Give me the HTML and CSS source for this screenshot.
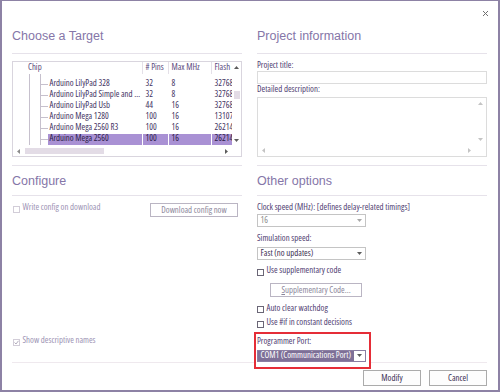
FILE: index.html
```html
<!DOCTYPE html>
<html>
<head>
    <meta charset="UTF-8">
    <title>Project settings</title>
    <link rel="stylesheet" href="styles.css">
</head>
<body>
<div class="dialog">
    <div class="topbar">
        <svg class="close" width="7" height="7" viewBox="0 0 7 7"><path d="M1 1L6 6M6 1L1 6" stroke="#707070" stroke-width="1"/></svg>
    </div>

    <div class="content">
        <!-- target chooser -->
        <div class="section">
            <div class="section-title">Choose a Target</div>
            <div class="tree">
                <div class="tree-main">
                    <div class="tree-head">
                        <span class="head-chip">Chip</span>
                        <span class="head-col"># Pins</span>
                        <span class="head-col">Max MHz</span>
                        <span class="head-col">Flash</span>
                    </div>
                    <div class="tree-body">
                        <div class="tree-rows">
                            <div class="row"><span class="indent"></span><span class="name">Arduino LilyPad 328</span><span class="num">32</span><span class="num">8</span><span class="num">32768</span></div>
                            <div class="row"><span class="indent"></span><span class="name cut">Arduino LilyPad Simple and SimpleSnap</span><span class="num">32</span><span class="num">8</span><span class="num">32768</span></div>
                            <div class="row"><span class="indent"></span><span class="name">Arduino LilyPad Usb</span><span class="num">44</span><span class="num">16</span><span class="num">32768</span></div>
                            <div class="row"><span class="indent"></span><span class="name">Arduino Mega 1280</span><span class="num">100</span><span class="num">16</span><span class="num">131072</span></div>
                            <div class="row"><span class="indent"></span><span class="name">Arduino Mega 2560 R3</span><span class="num">100</span><span class="num">16</span><span class="num">262144</span></div>
                            <div class="row selected"><span class="indent"></span><span class="name">Arduino Mega 2560</span><span class="num">100</span><span class="num">16</span><span class="num">262144</span></div>
                        </div>
                    </div>
                </div>
                <div class="vscroll">
                    <span class="arrow"><svg width="5" height="3"><path d="M0 3L2.5 0L5 3Z" fill="#5c5c5c"/></svg></span>
                    <span class="vtrack"><span class="vthumb"></span></span>
                    <span class="arrow"><svg width="5" height="3"><path d="M0 0L2.5 3L5 0Z" fill="#5c5c5c"/></svg></span>
                </div>
                <div class="hscroll">
                    <span class="harrow"><svg width="3" height="5"><path d="M3 0L0 2.5L3 5Z" fill="#8c8c8c"/></svg></span>
                    <span class="htrack"><span class="hthumb"></span></span>
                    <span class="harrow"><svg width="3" height="5"><path d="M0 0L3 2.5L0 5Z" fill="#5c5c5c"/></svg></span>
                </div>
                <div></div>
            </div>
        </div>

        <!-- project info -->
        <div class="section">
            <div class="section-title">Project information</div>
            <div class="label">Project title:</div>
            <div class="input"></div>
            <div class="label gap1">Detailed description:</div>
            <div class="textarea">
                <div class="ta-main"></div>
                <div class="vscroll">
                    <span class="arrow"><svg width="5" height="3"><path d="M0 3L2.5 0L5 3Z" fill="#c4c4c4"/></svg></span>
                    <span class="vtrack"></span>
                    <span class="arrow"><svg width="5" height="3"><path d="M0 0L2.5 3L5 0Z" fill="#c4c4c4"/></svg></span>
                </div>
                <div class="hscroll">
                    <span class="harrow"><svg width="3" height="5"><path d="M3 0L0 2.5L3 5Z" fill="#c4c4c4"/></svg></span>
                    <span class="htrack"></span>
                    <span class="harrow"><svg width="3" height="5"><path d="M0 0L3 2.5L0 5Z" fill="#c4c4c4"/></svg></span>
                </div>
                <div></div>
            </div>
        </div>

        <!-- configure -->
        <div class="section lower">
            <div class="section-title">Configure</div>
            <div class="config-row">
                <label class="check disabled"><span class="box"></span>Write config on download</label>
                <button class="btn btn-download">Download config now</button>
            </div>
            <label class="check disabled bottom-check"><span class="box"><svg width="5" height="5" viewBox="0 0 5 5"><path d="M0.5 2.5L2 4L4.5 0.8" fill="none" stroke="#aaa3b6" stroke-width="0.9"/></svg></span>Show descriptive names</label>
        </div>

        <!-- other options -->
        <div class="section lower">
            <div class="section-title">Other options</div>
            <div class="label">Clock speed (MHz): [defines delay-related timings]</div>
            <div class="combo combo-off gap2"><span class="combo-text">16</span><span class="combo-btn"><svg width="5" height="3"><path d="M0 0L2.5 3L5 0Z" fill="#a8a8a8"/></svg></span></div>
            <div class="label gap7">Simulation speed:</div>
            <div class="combo gap4"><span class="combo-text">Fast (no updates)</span><span class="combo-btn"><svg width="5" height="3"><path d="M0 0L2.5 3L5 0Z" fill="#5c5c5c"/></svg></span></div>
            <label class="check gap6"><span class="box"></span>Use supplementary code</label>
            <button class="btn btn-supp"><u>S</u>upplementary Code...</button>
            <label class="check gap7"><span class="box"></span>Auto clear watchdog</label>
            <label class="check gap5"><span class="box"></span>Use #if in constant decisions</label>
            <div class="port-box">
                <div class="label">Programmer Port:</div>
                <div class="combo combo-port"><span class="combo-text">COM1 (Communications Port)</span><span class="combo-btn"><svg width="5" height="3"><path d="M0 0L2.5 3L5 0Z" fill="#5c5c5c"/></svg></span></div>
            </div>
        </div>
    </div>

    <div class="footer">
        <button class="btn btn-main">Modify</button>
        <button class="btn btn-main">Cancel</button>
    </div>
</div>
</body>
</html>
```

FILE: styles.css
```css
* {
    box-sizing: border-box;
}

body {
    margin: 0;
    font-family: "Open Sans", "Liberation Sans", sans-serif;
    font-stretch: 75%;
    font-size: 8.8px;
    line-height: 9px;
    color: #504072;
    background: #ffffff;
}

.dialog {
    width: 500px;
    height: 392px;
    border: solid #8d82a5;
    border-width: 1px 2px 2px 2px;
    padding: 0 11px 0 10px;
    background: #ffffff;
}

.topbar {
    height: 26px;
    display: flex;
    justify-content: flex-end;
    align-items: flex-start;
}

.close {
    margin-top: 9px;
    margin-right: -2px;
}

.content {
    display: grid;
    grid-template-columns: 230px 230px;
    column-gap: 15px;
    border-bottom: 1px solid #efe9ee;
}

.section {
    padding-bottom: 8px;
    border-bottom: 1px solid #e6e2ea;
}

.section-title {
    font-family: "Liberation Sans", Arial, sans-serif;
    font-stretch: normal;
    font-size: 12.5px;
    line-height: 18px;
    color: #8576a8;
    padding-bottom: 8px;
    border-bottom: 1px solid #e6e2ea;
    margin-bottom: 7px;
}

.section.lower {
    display: flex;
    flex-direction: column;
    padding: 6px 0 0 0;
    border-bottom: none;
}

.section.lower .section-title {
    padding-bottom: 5px;
}

/* chip tree */
.tree {
    height: 96px;
    border: 1px solid #d9d5de;
    display: grid;
    grid-template-columns: 1fr 9px;
    grid-template-rows: 1fr 10px;
    color: #43335f;
}

.tree-main {
    display: flex;
    flex-direction: column;
    overflow: hidden;
}

.tree-head {
    height: 12px;
    flex: none;
    display: grid;
    grid-template-columns: 129px 26px 43px 1fr;
    color: #5a4a7c;
    white-space: nowrap;
}

.tree-head span {
    padding-top: 1px;
}

.head-chip {
    padding-left: 15px;
}

.head-col {
    border-left: 1px solid #e4e0e8;
    padding-left: 2.5px;
}

.tree-body {
    flex: 1;
    overflow: hidden;
}

.tree-rows {
    padding-top: 5px;
    background:
        linear-gradient(#c6c0cd, #c6c0cd) 16px 0 / 1px 100% no-repeat,
        linear-gradient(#c6c0cd, #c6c0cd) 27px 0 / 1px 100% no-repeat;
}

.row {
    display: grid;
    grid-template-columns: 35px 94px 26px 43px 1fr;
    height: 11px;
}

.row span {
    white-space: nowrap;
}

.row .name {
    padding-left: 1.5px;
}

.row .name.cut {
    overflow: hidden;
    text-overflow: ellipsis;
}

.row .num {
    border-left: 1px solid transparent;
    padding-left: 2.5px;
}

.row.selected .name,
.row.selected .num {
    background: #a991d4;
    color: #2c1c48;
}

.row.selected .num {
    border-left-color: #ffffff;
}

.indent {
    background: linear-gradient(#c6c0cd, #c6c0cd) 27px 5px / 8px 1px no-repeat;
}

.vscroll {
    display: flex;
    flex-direction: column;
}

.arrow {
    height: 11px;
    flex: none;
    display: flex;
    align-items: center;
    justify-content: center;
}

.vtrack {
    flex: 1;
    display: flex;
    justify-content: center;
    padding-top: 18px;
}

.vthumb {
    width: 6px;
    height: 8px;
    background: #e3dce6;
}

.hscroll {
    display: flex;
}

.harrow {
    width: 11px;
    flex: none;
    display: flex;
    align-items: center;
    justify-content: center;
}

.htrack {
    flex: 1;
    display: flex;
    align-items: center;
}

.hthumb {
    margin-left: 1px;
    width: 79px;
    height: 6px;
    background: #e3dce6;
}

/* fields */
.label {
    white-space: nowrap;
}

.gap1 { margin-top: 1px; }
.gap2 { margin-top: 2px; }
.gap4 { margin-top: 4px; }
.gap5 { margin-top: 5px; }
.gap6 { margin-top: 6px; }
.gap7 { margin-top: 7px; }

.input {
    height: 13px;
    margin-top: 1px;
    border: 1px solid #dcdcdc;
}

.textarea {
    height: 60px;
    margin-top: 3px;
    border: 1px solid #dcdcdc;
    display: grid;
    grid-template-columns: 1fr 11px;
    grid-template-rows: 1fr 11px;
}

.combo {
    width: 109px;
    height: 13px;
    border: 1px solid #c4c4c4;
    display: flex;
    align-items: center;
    color: #3a2e50;
}

.combo-off {
    color: #8c8c8c;
}

.combo-text {
    flex: 1;
    padding-left: 2.5px;
    white-space: nowrap;
}

.combo-btn {
    width: 11px;
    height: 100%;
    flex: none;
    display: flex;
    align-items: center;
    justify-content: center;
}

.combo-port {
    height: 12px;
    margin-top: 4px;
    background: #7e7097;
    border-color: #8a7ea2;
    color: #ffffff;
}

.combo-port .combo-btn {
    background: #ffffff;
}

.check {
    display: flex;
    align-items: flex-start;
    gap: 2.5px;
    white-space: nowrap;
}

.box {
    width: 7px;
    height: 7px;
    margin-top: 2.5px;
    flex: none;
    border: 1px solid #6a6676;
    background: #ffffff;
    display: flex;
    align-items: center;
    justify-content: center;
}

.check.disabled {
    color: #9d93b4;
    margin-left: 1px;
}

.check.disabled .box {
    border-color: #d2cdd8;
}

.bottom-check {
    margin-top: auto;
    margin-bottom: 16px;
}

.config-row {
    display: flex;
    justify-content: space-between;
    align-items: flex-start;
}

.btn {
    font: inherit;
    font-stretch: 75%;
    line-height: 12px;
    height: 14px;
    padding: 0;
    border: 1px solid #bab5c3;
    background: #ffffff;
    color: #8c879b;
    text-align: center;
}

.btn-download {
    width: 88px;
    margin-right: 4px;
}

.btn-supp {
    width: 92px;
    margin: 7px 0 0 13px;
}

.port-box {
    width: fit-content;
    margin: 4px 0 -7px -3px;
    padding: 3px 3px 5px 1px;
    border: 2px solid #e52d37;
    background: #ffffff;
}

.footer {
    display: flex;
    justify-content: flex-end;
    gap: 8px;
    padding-top: 7px;
}

.btn-main {
    width: 58px;
    height: 16px;
    line-height: 14px;
    border-color: #ababab;
    background: #fdfdfd;
    color: #3a2f52;
}
```
